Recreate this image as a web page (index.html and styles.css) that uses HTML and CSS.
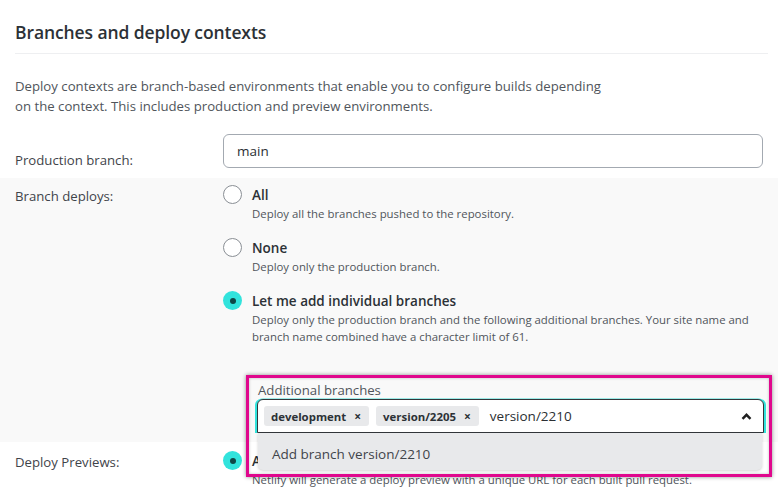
FILE: index.html
```html
<!DOCTYPE html>
<html>
<head>
<meta charset="utf-8">
<link rel="stylesheet" href="styles.css">
</head>
<body>
<section class="panel">
  <h2 class="title">Branches and deploy contexts</h2>
  <p class="intro">Deploy contexts are branch-based environments that enable you to configure builds depending<br>on the context. This includes production and preview environments.</p>

  <div class="row row-prod">
    <div class="label label-prod">Production branch:</div>
    <div class="control">
      <div class="text-input">main</div>
    </div>
  </div>

  <div class="row row-gray">
    <div class="label">Branch deploys:</div>
    <div class="control">
      <div class="option">
        <span class="radio"></span>
        <div class="option-text">
          <div class="option-title">All</div>
          <div class="option-desc">Deploy all the branches pushed to the repository.</div>
        </div>
      </div>
      <div class="option">
        <span class="radio"></span>
        <div class="option-text">
          <div class="option-title">None</div>
          <div class="option-desc">Deploy only the production branch.</div>
        </div>
      </div>
      <div class="option">
        <span class="radio radio-on"></span>
        <div class="option-text">
          <div class="option-title">Let me add individual branches</div>
          <div class="option-desc">Deploy only the production branch and the following additional branches. Your site name and<br>branch name combined have a character limit of 61.</div>
        </div>
      </div>

      <div class="field">
        <div class="field-label">Additional branches</div>
        <div class="select">
          <span class="chip">development <span class="chip-x">×</span></span>
          <span class="chip">version/2205 <span class="chip-x">×</span></span>
          <span class="typed">version/2210</span>
          <svg class="caret" width="11" height="7" viewBox="0 0 11 7"><path d="M1.5 5.8 L5.5 1.8 L9.5 5.8" fill="none" stroke="#1f1f1f" stroke-width="2.4"/></svg>
          <div class="menu">Add branch version/2210</div>
        </div>
        <div class="highlight"></div>
      </div>
    </div>
  </div>

  <div class="row row-prev">
    <div class="label">Deploy Previews:</div>
    <div class="control">
      <div class="option">
        <span class="radio radio-on"></span>
        <div class="option-text">
          <div class="option-title">Any pull request against your production branch</div>
          <div class="option-desc">Netlify will generate a deploy preview with a unique URL for each built pull request.</div>
        </div>
      </div>
    </div>
  </div>
</section>
</body>
</html>
```
FILE: styles.css
```css
* { box-sizing: border-box; }
html, body { margin: 0; padding: 0; background: #fff; overflow: hidden; }
body {
  font-family: "Open Sans", "Noto Sans", "Liberation Sans", sans-serif;
  color: #4b4f54;
  width: 778px;
  height: 487px;
}
.panel { padding-top: 20px; }
.title {
  margin: 0 10px 0 15px;
  padding-bottom: 9px;
  border-bottom: 1px solid #eeeff1;
  font-size: 17.5px;
  line-height: 24px;
  font-weight: 600;
  color: #2c3136;
  letter-spacing: -0.1px;
}
.intro {
  margin: 22px 15px 18px 15px;
  font-size: 13.2px;
  line-height: 20px;
  color: #50555b;
}
.row {
  display: grid;
  grid-template-columns: 208px 1fr;
  padding: 0 15px;
}
.label {
  font-size: 13.2px;
  line-height: 20px;
  color: #3f444a;
}
.row-prod { padding-bottom: 8px; }
.label-prod { padding-top: 16px; }
.text-input {
  height: 34px;
  border: 1px solid #a3a9b1;
  border-radius: 6px;
  padding: 0 13px;
  font-size: 13.5px;
  line-height: 32px;
  color: #2b2f33;
}
.row-gray {
  background: #f9f9f9;
  padding-top: 7px;
  padding-bottom: 8px;
  height: 264px;
}
.row-gray .label { padding-top: 1px; }
.option {
  display: flex;
  gap: 10px;
  margin-bottom: 16px;
}
.radio {
  flex: none;
  width: 19px;
  height: 19px;
  border-radius: 50%;
  border: 1.5px solid #8a8f95;
  background: #fff;
  position: relative;
}
.radio-on {
  border: none;
  background: #32e3dc;
}
.radio-on::after {
  content: "";
  position: absolute;
  left: 6.5px;
  top: 6.5px;
  width: 6px;
  height: 6px;
  border-radius: 50%;
  background: #0e4746;
}
.option-title {
  font-size: 13.5px;
  line-height: 20px;
  font-weight: 600;
  color: #2c3136;
}
.option-desc {
  font-size: 11.4px;
  line-height: 17px;
  color: #50555b;
}
.field {
  position: relative;
  margin-top: 36px;
  margin-left: 34px;
}
.field-label {
  font-size: 13.2px;
  line-height: 18px;
  color: #50555b;
  padding-left: 1px;
}
.select {
  position: relative;
  height: 34px;
  border: 1px solid #33373b;
  border-radius: 6px 6px 0 0;
  background: #fff;
  box-shadow: -2px 0 0 #32e3dc, 2px 0 0 #32e3dc, 0 -1px 0 #9cebe7;
  display: flex;
  align-items: center;
  padding-left: 6px;
  gap: 7px;
  margin-right: -1px;
}
.chip {
  display: inline-flex;
  align-items: center;
  height: 20px;
  padding: 0 8px 0 7px;
  background: #e8e9eb;
  border-radius: 3px;
  font-size: 11.4px;
  font-weight: 700;
  color: #2c3136;
  gap: 8px;
}
.chip-x { font-size: 12px; font-weight: 700; }
.typed {
  font-size: 13.5px;
  color: #2b2f33;
  margin-left: 4px;
}
.caret {
  position: absolute;
  right: 11px;
  top: 13px;
}
.menu {
  position: absolute;
  left: 0;
  right: 1px;
  top: 33px;
  height: 37px;
  background: #e8e9eb;
  border-radius: 0 0 5px 5px;
  box-shadow: 0 1px 3px rgba(0,0,0,0.18);
  font-size: 13.5px;
  line-height: 37px;
  padding: 3px 0 0 14px;
  color: #3f444a;
  z-index: 2;
}
.highlight {
  position: absolute;
  left: -11px;
  top: -6px;
  width: 526px;
  height: 102px;
  border: 3px solid #e0078d;
  box-shadow: 0 0 4px rgba(0,0,0,0.45), inset 0 0 3px rgba(0,0,0,0.25);
  z-index: 3;
  pointer-events: none;
}
.row-prev { padding-top: 9px; }
.row-prev .label { padding-top: 1px; }
.row-prev .option-title { white-space: nowrap; }
```
